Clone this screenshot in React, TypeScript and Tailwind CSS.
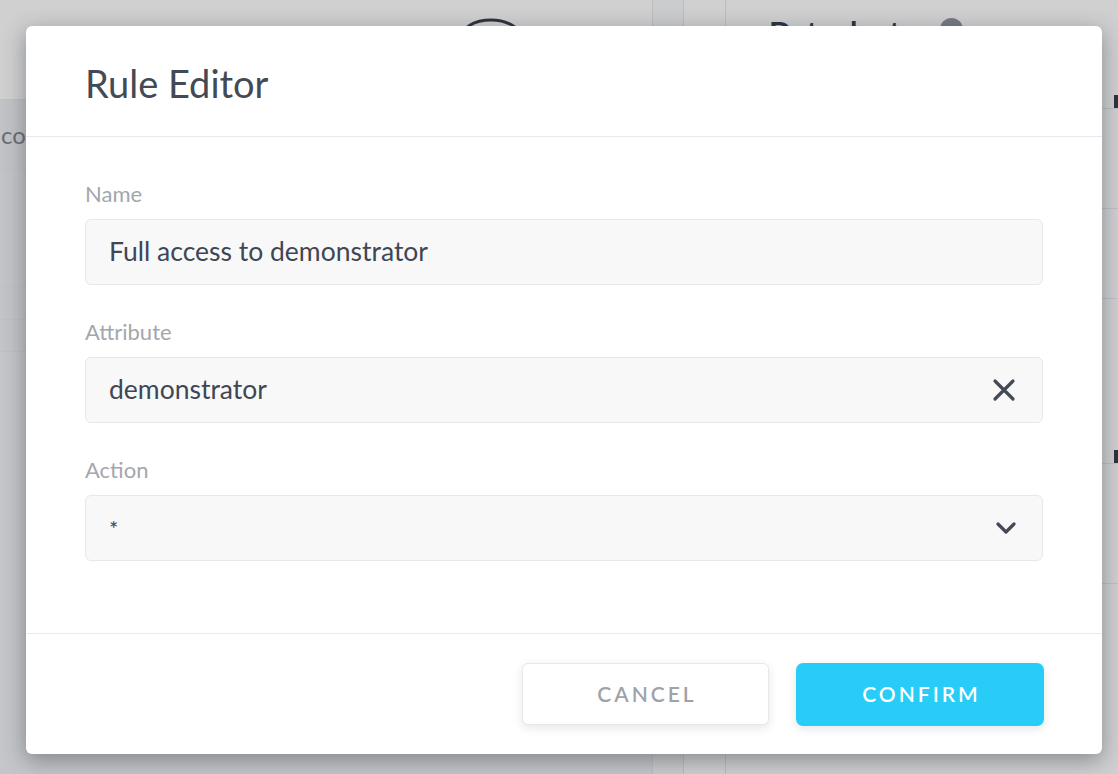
import React from "react";

function XIcon() {
  return (
    <svg width="24" height="24" viewBox="0 0 24 24" fill="none" stroke="#434a55" strokeWidth="3.2" strokeLinecap="round">
      <path d="M3 3 L21 21 M21 3 L3 21" />
    </svg>
  );
}

function Chevron() {
  return (
    <svg width="20" height="12" viewBox="0 0 20 12" fill="none" stroke="#434a55" strokeWidth="3.2" strokeLinecap="round" strokeLinejoin="round">
      <path d="M2 2 L10 10 L18 2" />
    </svg>
  );
}

function Field({ label, children }: { label: string; children: React.ReactNode }) {
  return (
    <div className="flex flex-col">
      <div className="h-[28px] text-[22px] leading-[28px] text-[#a3a7ad]">{label}</div>
      <div className="mt-[11px] flex h-[66px] items-center justify-between rounded-[6px] border-[1.5px] border-[#e6e8eb] bg-[#f8f8f9] pl-[23px] pr-[26px] text-[26.5px] text-[#3f4654]">
        {children}
      </div>
    </div>
  );
}

export default function App() {
  return (
    <div className="relative h-[774px] w-[1118px] overflow-hidden bg-white font-['Lato','Open_Sans',sans-serif]">
      {/* underlying page */}
      <div className="flex h-full">
        <div className="flex w-[652px] flex-col">
          <div className="relative h-[100px] border-b border-[#e4e6ea] bg-[#fbfbfb]">
            <svg className="absolute left-[455px] top-[16px]" width="72" height="40" viewBox="0 0 72 40" fill="none">
              <ellipse cx="36" cy="22" rx="30" ry="18" stroke="#2f3542" strokeWidth="3" />
            </svg>
          </div>
          <div className="flex h-[70px] items-center border-b border-[#e4e6ea] bg-[#e9eaed] text-[24px] text-[#7a7f88]">
            <span className="pl-[1px]">co</span>
          </div>
          <div className="h-[117px] border-b border-[#e4e6ea] bg-[#eaebee]" />
          <div className="h-[33px] border-b border-[#e4e6ea] bg-[#eaebee]" />
          <div className="h-[32px] border-b border-[#e4e6ea] bg-[#eaebee]" />
          <div className="flex-1 bg-[#eceef0]" />
        </div>
        <div className="w-[31px] border-l border-[#e0e2e5] bg-[#f4f5f6]" />
        <div className="w-[42px] border-l border-[#e0e2e5] bg-[#fbfbfb]" />
        <div className="flex flex-1 flex-col border-l border-[#e0e2e5] bg-[#fbfbfb]">
          <div className="flex h-[95px] items-start gap-[26px] pl-[43px] pt-[10px]">
            <span className="text-[30px] font-bold text-[#2f3542]">Dataplants</span>
            <span className="mt-[8px] h-[23px] w-[23px] rounded-full bg-[#8a8f98]" />
          </div>
          <div className="flex h-[13px] justify-end">
            <div className="w-[4px] bg-[#2f3542]" />
          </div>
          <div className="h-[100px] border-t border-[#e4e6ea]" />
          <div className="h-[90px] border-t border-[#e4e6ea]" />
          <div className="h-[152px] border-t border-[#e4e6ea]" />
          <div className="flex h-[13px] justify-end">
            <div className="w-[4px] bg-[#2f3542]" />
          </div>
          <div className="h-[120px] border-t border-[#e4e6ea]" />
          <div className="flex flex-1 justify-center gap-[66px] border-t border-[#e4e6ea] pt-[8px]">
            <div className="h-[4px] w-[3px] bg-[#2f3542]" />
            <div className="h-[4px] w-[3px] bg-[#2f3542]" />
          </div>
        </div>
      </div>

      {/* overlay */}
      <div className="absolute inset-0 bg-[rgba(40,42,44,0.2)] pl-[26px] pt-[26px]">
        <div className="flex h-[728px] w-[1076px] flex-col overflow-hidden rounded-[6px] bg-white shadow-[0_6px_22px_rgba(45,50,60,0.45)]">
          <div className="flex h-[111px] shrink-0 items-center border-b border-[#e7eaee] px-[59px] pt-[4px]">
            <h1 className="text-[38px] font-normal leading-none text-[#434a56]">Rule Editor</h1>
          </div>
          <div className="flex h-[497px] shrink-0 flex-col gap-[33px] border-b border-[#e7eaee] px-[59px] pt-[43px]">
            <Field label="Name">
              <span>Full access to demonstrator</span>
            </Field>
            <Field label="Attribute">
              <span>demonstrator</span>
              <XIcon />
            </Field>
            <Field label="Action">
              <span className="text-[22px]">*</span>
              <Chevron />
            </Field>
          </div>
          <div className="flex flex-1 items-center justify-end gap-[27px] pr-[58px]">
            <button className="flex h-[62px] w-[247px] items-center justify-center rounded-[6px] border border-[#e6e8eb] bg-white pl-[3px] text-[21px] font-semibold tracking-[3px] text-[#9ea3aa] shadow-[0_3px_10px_rgba(40,50,70,0.12)]">
              CANCEL
            </button>
            <button className="flex h-[63px] w-[248px] items-center justify-center rounded-[7px] bg-[#27cdf6] pl-[3px] text-[21px] font-semibold tracking-[3px] text-white shadow-[0_3px_10px_rgba(40,50,70,0.12)]">
              CONFIRM
            </button>
          </div>
        </div>
      </div>
    </div>
  );
}
